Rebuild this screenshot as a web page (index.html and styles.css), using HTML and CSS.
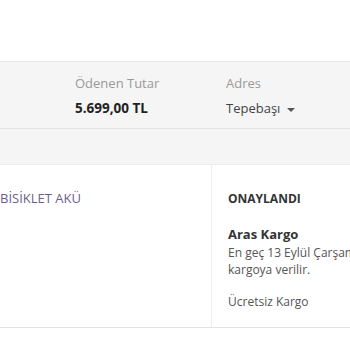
FILE: index.html
```html
<!DOCTYPE html>
<html lang="tr">
<head>
  <meta charset="UTF-8" />
  <meta name="viewport" content="width=device-width, initial-scale=1.0"/>
  <title>Siparişlerim</title>
  <link rel="stylesheet" href="styles.css">
</head>
<body>

  <div class="top-space"></div>

  <div class="order-summary">
    <div class="summary-item amount">
      <div class="label">Ödenen Tutar</div>
      <div class="value">5.699,00 TL</div>
    </div>
    <div class="summary-item address">
      <div class="label">Adres</div>
      <div class="value select">Tepebaşı <span class="caret"></span></div>
    </div>
  </div>

  <div class="summary-gap"></div>

  <div class="order-row">
    <div class="product">
      <div class="product-name">BİSİKLET AKÜ</div>
    </div>
    <div class="shipment">
      <div class="status">ONAYLANDI</div>
      <div class="cargo-name">Aras Kargo</div>
      <div class="cargo-info">En geç 13 Eylül Çarşamba günü kargoya verilir.</div>
      <div class="cargo-fee">Ücretsiz Kargo</div>
    </div>
  </div>

</body>
</html>
```

FILE: styles.css
```css
body {
  margin: 0;
  background: #ffffff;
  font-family: 'Open Sans', sans-serif;
  color: #333333;
  overflow: hidden;
}
.top-space {
  height: 61px;
}
.order-summary {
  background: #f5f5f5;
  border-top: 1px solid #e6e6e6;
  border-bottom: 1px solid #e2e2e2;
  display: flex;
  height: 68px;
  box-sizing: border-box;
  padding: 12px 0 0 75px;
}
.summary-item .label {
  font-size: 13px;
  color: #999999;
  line-height: 18px;
}
.summary-item .value {
  font-size: 13px;
  line-height: 18px;
  margin-top: 7px;
}
.amount {
  width: 151px;
}
.amount .value {
  font-size: 13.5px;
  font-weight: bold;
  color: #222222;
}
.select {
  color: #444444;
}
.caret {
  display: inline-block;
  width: 0;
  height: 0;
  margin-left: 3px;
  vertical-align: middle;
  border-left: 4px solid transparent;
  border-right: 4px solid transparent;
  border-top: 4px solid #555555;
}
.summary-gap {
  background: #f5f5f5;
  height: 35px;
  border-bottom: 1px solid #ececec;
}
.order-row {
  display: flex;
  border-bottom: 1px solid #e2e2e2;
  height: 163px;
  box-sizing: border-box;
}
.product {
  width: 211px;
  flex-shrink: 0;
  border-right: 1px solid #eeeeee;
  padding-top: 25px;
}
.product-name {
  font-size: 13px;
  color: #6a5f8c;
  line-height: 16px;
}
.shipment {
  flex-shrink: 0;
  width: 200px;
  padding: 26px 0 0 16px;
}
.status {
  font-size: 12px;
  font-weight: bold;
  color: #333333;
  line-height: 16px;
}
.cargo-name {
  font-size: 13px;
  font-weight: bold;
  color: #333333;
  margin-top: 17px;
  line-height: 20px;
}
.cargo-info {
  font-size: 12px;
  color: #555555;
  line-height: 17px;
}
.cargo-fee {
  font-size: 12px;
  color: #555555;
  line-height: 17px;
  margin-top: 15px;
}
```
